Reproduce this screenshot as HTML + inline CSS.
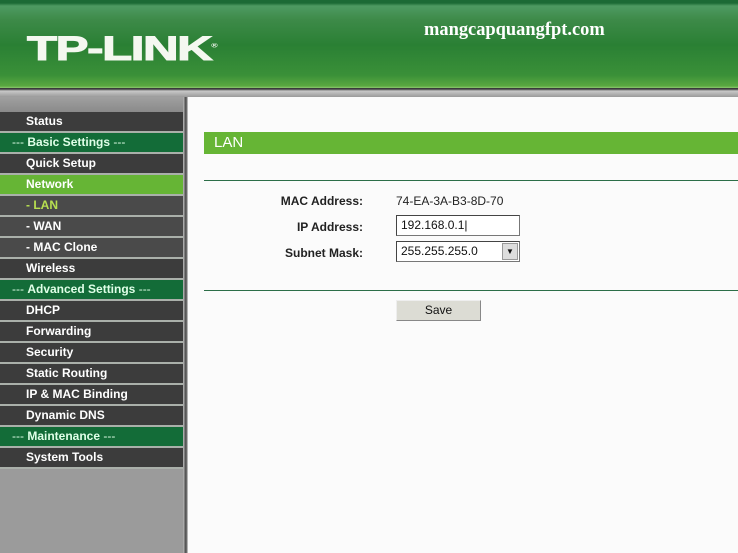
<!DOCTYPE html>
<html><head><meta charset="utf-8"><style>
*{margin:0;padding:0;box-sizing:border-box}
body{width:738px;height:553px;overflow:hidden;background:#fafafa;font-family:"Liberation Sans",Arial,sans-serif;position:relative}
#hdr{position:absolute;left:0;top:0;width:738px;height:88px;background:linear-gradient(180deg,#1c6a35 0,#1c6a35 3px,#4e9a62 6px,#3d8a48 20px,#2a8034 45px,#3a9038 75px,#5aa840 86px,#8cc870 88px)}
#logo{position:absolute;left:27px;top:30px;color:#f4f8f0;font-weight:bold;font-size:34px;letter-spacing:-1px;transform:scaleX(1.45);transform-origin:left;white-space:nowrap;-webkit-text-stroke:1px #f4f8f0}
#site{position:absolute;left:424px;top:19px;color:#fff;font-family:"Liberation Serif",serif;font-weight:bold;font-size:19px;transform:scaleX(0.97);transform-origin:left;white-space:nowrap}
#band{position:absolute;left:0;top:88px;width:738px;height:9px;background:linear-gradient(180deg,#3a3a3a 0,#3a3a3a 1px,#c8c8c8 3px,#9a9a9a 9px)}
#side{position:absolute;left:0;top:97px;width:183px;height:456px;background:#9b9b9b}
#side .top{height:15px;background:linear-gradient(#a0a0a0,#8a8a8a)}
#div{position:absolute;left:183px;top:97px;width:5px;height:456px;background:linear-gradient(90deg,#c0c0c0,#6a6a6a 40%,#444 60%,#d8d8d8)}
.it{height:21px;border-bottom:2px solid #aab0aa;background:#3c3c3c;color:#fff;font-weight:bold;font-size:12px;line-height:19px;padding-left:26px}
.g{background:#136c38;color:#e0ffe8;padding-left:12px;font-weight:normal}
.g b{font-weight:bold}
.n{background:#66b535}
.s{background:#4a4a4a}
.lan{color:#b8e050}
#main{position:absolute;left:188px;top:97px;width:550px;height:456px;background:#fbfbfb}
#bar{position:absolute;left:16px;top:35px;width:534px;height:22px;background:#66b535;color:#fff;font-size:15px;line-height:22px;padding-left:10px}
.ln{position:absolute;left:16px;width:534px;height:1px;background:#2c6e48}
.lb{position:absolute;right:375px;font-weight:bold;font-size:12px;color:#222}
.v{position:absolute;left:208px;font-size:12px;color:#222}
.box{position:absolute;left:208px;width:124px;height:21px;border:1px solid #777;border-top-color:#444;border-left-color:#444;background:#fff;font-size:12px;line-height:19px;padding-left:4px;color:#111}
#btn{position:absolute;left:208px;top:203px;width:85px;height:21px;background:#dcdcd4;border:1px solid #888;border-top-color:#eee;border-left-color:#eee;font-size:12px;text-align:center;line-height:19px;color:#111}
</style></head><body>
<div id="hdr"><div id="logo">TP-LINK<sup style="font-size:6px;-webkit-text-stroke:0">®</sup></div><div id="site">mangcapquangfpt.com</div></div>
<div id="band"></div>
<div id="side"><div class="top"></div>
<div class="it">Status</div>
<div class="it g">--- <b>Basic Settings</b> ---</div>
<div class="it">Quick Setup</div>
<div class="it n">Network</div>
<div class="it s lan">- LAN</div>
<div class="it s">- WAN</div>
<div class="it s">- MAC Clone</div>
<div class="it">Wireless</div>
<div class="it g">--- <b>Advanced Settings</b> ---</div>
<div class="it">DHCP</div>
<div class="it">Forwarding</div>
<div class="it">Security</div>
<div class="it">Static Routing</div>
<div class="it">IP &amp; MAC Binding</div>
<div class="it">Dynamic DNS</div>
<div class="it g">--- <b>Maintenance</b> ---</div>
<div class="it">System Tools</div>
</div>
<div id="div"></div>
<div id="main">
<div id="bar">LAN</div>
<div class="ln" style="top:83px"></div>
<div class="lb" style="top:97px">MAC Address:</div><div class="v" style="top:97px">74-EA-3A-B3-8D-70</div>
<div class="lb" style="top:123px">IP Address:</div><div class="box" style="top:118px">192.168.0.1|</div>
<div class="lb" style="top:149px">Subnet Mask:</div><div class="box" style="top:144px">255.255.255.0<span style="position:absolute;right:1px;top:1px;width:16px;height:17px;background:#ddd;border:1px solid #999;font-size:8px;text-align:center;line-height:16px">▼</span></div>
<div class="ln" style="top:193px"></div>
<div id="btn">Save</div>
</div>
</body></html>
